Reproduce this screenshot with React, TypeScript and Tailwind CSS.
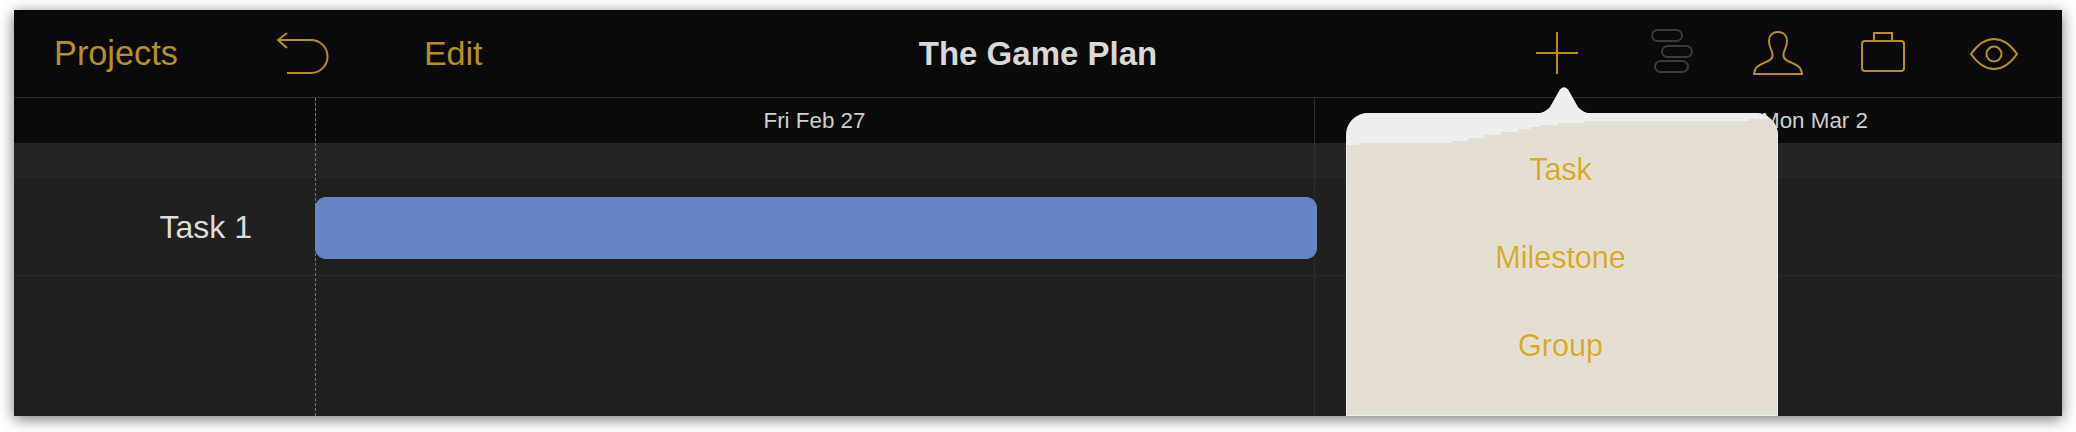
import React from 'react';

const GOLD = '#b8901f';

const UndoIcon = () => (
  <svg width="54" height="44" viewBox="0 0 54 44" fill="none" stroke={GOLD} strokeWidth={2}>
    <path d="M11 1 L2 8 L11 16 M2 8 H35 A16.5 16.5 0 0 1 35 41 H11" />
  </svg>
);

const PlusIcon = () => (
  <svg width="42" height="42" viewBox="0 0 42 42" fill="none" stroke={GOLD} strokeWidth={2}>
    <path d="M21 0 V42 M0 21 H42" />
  </svg>
);

const GanttIcon = () => (
  <svg width="42" height="44" viewBox="0 0 42 44" fill="none" stroke="#3c3c3c" strokeWidth={2}>
    <rect x="1" y="1" width="30" height="11" rx="5.5" />
    <rect x="11" y="17" width="30" height="11" rx="5.5" />
    <rect x="4" y="32" width="33" height="11" rx="5.5" />
  </svg>
);

const PersonIcon = () => (
  <svg width="50" height="44" viewBox="0 0 50 44" fill="none" stroke={GOLD} strokeWidth={2}>
    <path d="M25 1 C19 1 16 5 16 10 C16 15 18 18 19 21 C20 24 20 26 18 28 C15 31 6 33 3 37 C2 39 1 41 1 43 H49 C49 41 48 39 47 37 C44 33 35 31 32 28 C30 26 30 24 31 21 C32 18 34 15 34 10 C34 5 31 1 25 1 Z" />
  </svg>
);

const CaseIcon = () => (
  <svg width="44" height="40" viewBox="0 0 44 40" fill="none" stroke={GOLD} strokeWidth={2}>
    <rect x="1" y="9" width="42" height="30" rx="3" />
    <path d="M13 9 V1 H31 V9" />
  </svg>
);

const EyeIcon = () => (
  <svg width="48" height="32" viewBox="0 0 48 32" fill="none" stroke={GOLD} strokeWidth={2}>
    <path d="M1 16 C8 6 16 1 24 1 C32 1 40 6 47 16 C40 26 32 31 24 31 C16 31 8 26 1 16 Z" />
    <circle cx="24" cy="16" r="7.5" />
  </svg>
);

const PopoverItem = ({ label }: { label: string }) => (
  <div className="h-[88px] flex items-center justify-center pr-[3px] text-[30.5px] text-[#d9a92a] [text-shadow:0_0_2px_#f4f4f4]">
    {label}
  </div>
);

export default function App() {
  return (
    <div className="w-[2076px] h-[432px] bg-white pl-[14px] pt-[10px] font-['Liberation_Sans',sans-serif]">
      <div className="relative w-[2048px] h-[406px] overflow-hidden bg-[#202020] flex flex-col shadow-[0_3px_14px_rgba(0,0,0,0.55)]">
        <div className="h-[88px] shrink-0 bg-[#0a0a0a] border-b border-[#2c2c2c] grid grid-cols-[1fr_auto_1fr] items-center">
          <div className="flex items-center">
            <span className="ml-[40px] text-[34.3px] text-[#b8901f]">Projects</span>
            <span className="ml-[98px]"><UndoIcon /></span>
            <span className="ml-[94px] text-[34px] text-[#b8901f]">Edit</span>
          </div>
          <div className="text-[33px] font-bold text-[#d8d8d8]">The Game Plan</div>
          <div className="flex items-center justify-end pr-[44px]">
            <span className="mb-[2px]"><PlusIcon /></span>
            <span className="ml-[73px] mb-[6px]"><GanttIcon /></span>
            <span className="ml-[60px] mb-[2px]"><PersonIcon /></span>
            <span className="ml-[58px] mb-[4px]"><CaseIcon /></span>
            <span className="ml-[65px]"><EyeIcon /></span>
          </div>
        </div>

        <div className="flex flex-1 min-h-0">
          <div className="w-[301px] shrink-0 flex flex-col">
            <div className="h-[45px] bg-[#0a0a0a]" />
            <div className="h-[35px] bg-[#242424] border-b border-[#2b2b2b]" />
            <div className="h-[98px] border-b border-[#2b2b2b] flex items-center justify-end pr-[63px] text-[32px] text-[#dcdcdc]">
              Task 1
            </div>
          </div>

          <div className="relative flex-1 min-w-0 flex flex-col border-l border-dashed border-[#777777]">
            <div className="h-[45px] shrink-0 bg-[#0a0a0a] flex text-[22.4px] text-[#cfcfcf]">
              <div className="w-[997px] shrink-0 flex items-center justify-center">Fri Feb 27</div>
              <div className="w-[1003px] shrink-0 flex items-center justify-center">Mon Mar 2</div>
            </div>
            <div className="h-[35px] shrink-0 bg-[#242424] border-b border-[#2b2b2b]" />
            <div className="h-[98px] shrink-0 border-b border-[#2b2b2b] flex items-center pt-[2px]">
              <div className="relative z-10 w-[1002px] h-[62px] -ml-px rounded-[11px] bg-[#6486c4]" />
            </div>
            <div className="absolute left-[998px] top-0 bottom-0 w-px bg-[#2e2e2e]" />
          </div>
        </div>

        {/* popover sits on top of everything, arrow points at the plus button */}
        <div className="absolute z-20 left-[1332px] top-[103px] w-[432px] h-[303px]">
          <svg className="absolute left-[186px] -top-[27px]" width="64" height="28" viewBox="0 0 64 28" fill="#eeeeee">
            <path d="M0 28 C10 28 14 25 18 21 L27 5 C30 0 34 0 37 5 L46 21 C50 25 54 28 64 28 Z" />
          </svg>
          <div className="relative h-full rounded-t-[22px] overflow-hidden bg-[#e4ddd1] border-x border-b border-[#eeeeee] pt-[13px]">
            <svg className="absolute left-0 top-0" width="432" height="33" viewBox="0 0 432 33" fill="#eeeeee">
              <path d="M0 0 H432 V2 H421 V6 H402 V8 H237 V10 H211 V12 H194 V14 H184 V16 H171 V19 H154 V22 H137 V25 H121 V28 H104 V30 H12 V32 H0 Z" />
            </svg>
            <div className="relative">
              <PopoverItem label="Task" />
              <PopoverItem label="Milestone" />
              <PopoverItem label="Group" />
            </div>
          </div>
        </div>
      </div>
    </div>
  );
}
